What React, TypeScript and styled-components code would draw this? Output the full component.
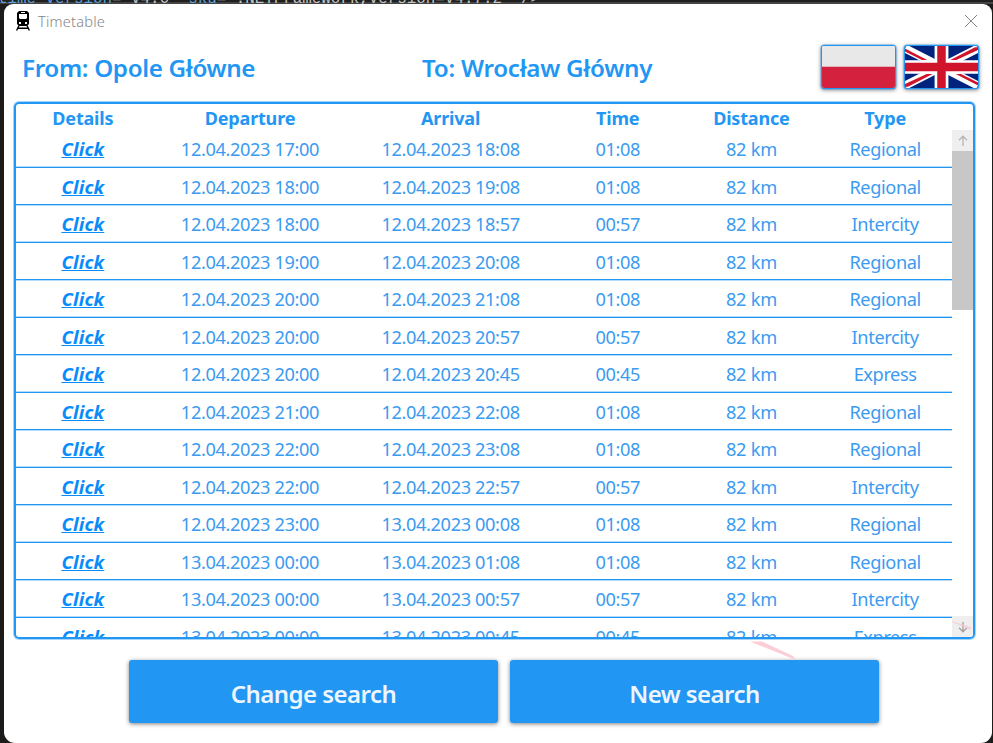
import React from "react";
import styled, { createGlobalStyle } from "styled-components";

const BLUE = "#2296f3";

const GlobalStyle = createGlobalStyle`
  * { box-sizing: border-box; }
  body { margin: 0; overflow: hidden; background: #1e1c1b; font-family: "Noto Sans", "Open Sans", sans-serif; }
`;

const Desktop = styled.div`
  position: relative;
  width: 993px;
  height: 743px;
  overflow: hidden;
  padding: 4px 1px 0 4px;
  background: linear-gradient(#1f1f1f 0 2px, #444 2px 4px, #1e1c1b 4px);
`;

const EditorLine = styled.div`
  position: absolute;
  left: -2px;
  top: -10px;
  height: 14px;
  overflow: hidden;
  white-space: pre;
  font: 15.85px/18px "Liberation Mono", monospace;
  color: #c4c4c4;
`;

const Attribute = styled.span`
  color: #5c9fd6;
`;

const Window = styled.main`
  position: relative;
  display: flex;
  flex-direction: column;
  height: 739px;
  background: #fff;
  border-radius: 9px 9px 11px 11px;
`;

const TitleBar = styled.header`
  display: flex;
  align-items: center;
  height: 34px;
  padding: 0 14px 1px 12px;
`;

const Title = styled.h1`
  flex: 1;
  margin: 0 0 0 8px;
  font-size: 14.6px;
  font-weight: 300;
  letter-spacing: 0.2px;
  color: #858585;
`;

const Route = styled.section`
  display: grid;
  grid-template-columns: 400px 1fr auto;
  height: 64px;
  padding: 7px 13px 0 18px;
`;

const Station = styled.h2<{ $track: string }>`
  margin: 5px 0 0;
  font-size: 24.2px;
  line-height: 36px;
  font-weight: 600;
  letter-spacing: ${(p) => p.$track};
  color: ${BLUE};
  white-space: nowrap;
`;

const Flags = styled.div`
  display: flex;
  gap: 8px;
`;

const FlagButton = styled.button`
  width: 75px;
  height: 44px;
  padding: 0;
  border: 1px solid ${BLUE};
  border-radius: 3px;
  overflow: hidden;
  background: #fff;
  box-shadow: 0 0 0 0.5px rgba(34, 150, 243, 0.6), 0 1px 4px rgba(0, 0, 0, 0.5);
  svg { display: block; width: 100%; height: 100%; }
`;

const Panel = styled.section`
  display: flex;
  flex-direction: column;
  width: 961px;
  height: 537px;
  margin-left: 10px;
  border: 2px solid ${BLUE};
  border-radius: 5px;
  box-shadow: 0 0 0 1px rgba(34, 150, 243, 0.4);
  overflow: hidden;
`;

const Columns = styled.div`
  display: grid;
  grid-template-columns: 1fr 1.5fr 1.5fr 1fr 1fr 1fr;
  width: 936px;
  text-align: center;
  white-space: nowrap;
`;

const HeadRow = styled(Columns)`
  height: 26px;
  font-size: 18px;
  line-height: 28px;
  font-weight: 700;
  color: ${BLUE};
`;

const HeadCell = styled.span`
  letter-spacing: -0.18px;
`;

const Body = styled.div`
  display: flex;
  flex: 1;
  min-height: 0;
`;

const List = styled.div`
  width: 936px;
  overflow: hidden;
`;

const Row = styled(Columns)`
  height: 37.5px;
  border-bottom: 1px solid ${BLUE};
  font-size: 18.2px;
  line-height: 38px;
  color: #3b9bf0;
  &:nth-child(odd) { box-shadow: inset 0 -1px 0 rgba(34, 150, 243, 0.35); }
  &:nth-child(even) { box-shadow: 0 1px 0 rgba(34, 150, 243, 0.35); }
`;

const Cell = styled.span<{ $track: string }>`
  letter-spacing: ${(p) => p.$track};
`;

const DetailLink = styled.a`
  font-weight: 700;
  font-style: italic;
  font-size: 18.6px;
  letter-spacing: 0.15px;
  color: #0a8bfa;
  text-decoration: underline;
  text-decoration-thickness: 1.3px;
  text-underline-offset: 1px;
`;

const ScrollBar = styled.div`
  display: flex;
  flex-direction: column;
  flex: 1;
`;

const ScrollButton = styled.div`
  display: grid;
  place-items: center;
  height: 21px;
  background: #efefef;
`;

const Track = styled.div`
  flex: 1;
`;

const Thumb = styled.div`
  height: 159px;
  background: #c7c7c7;
`;

const Actions = styled.footer`
  display: flex;
  gap: 12px;
  padding: 21px 0 0 125px;
`;

const ActionButton = styled.button`
  width: 369px;
  height: 63px;
  padding: 4px 0 0;
  border: 0;
  border-radius: 3px;
  background: ${BLUE};
  color: #edf6ff;
  font: 600 24px/34px "Noto Sans", sans-serif;
  letter-spacing: -0.55px;
  box-shadow: 0 1px 4px rgba(0, 0, 0, 0.5);
`;

const Streaks = styled.svg`
  position: absolute;
  left: 736px;
  top: 610px;
  pointer-events: none;
`;

const TrainIcon = () => (
  <svg width="14" height="20" viewBox="0 0 14 20">
    <path fillRule="evenodd" d="M3 0h8l2 2v11l-2 2H3l-2-2V2zM5 1v1h4V1zM3 3v4l1 1h6l1-1V3zM3 11v2h2v-2zM9 11v2h2v-2z" />
    <path d="M3 14.5.6 19.5M11 14.5l2.4 5M2.2 17.2h9.6" stroke="#000" strokeWidth="1.4" />
  </svg>
);

const CloseIcon = () => (
  <svg width="14" height="14" viewBox="0 0 14 14">
    <path d="M1 1l12 12M13 1L1 13" stroke="#858585" strokeWidth="1" />
  </svg>
);

const Arrow = ({ down, color }: { down?: boolean; color: string }) => (
  <svg width="10" height="12" viewBox="0 0 10 12">
    <path
      d={down ? "M5 1v9.5M1 6.8l4 4 4-4" : "M5 11V1.5M1 5.2l4-4 4 4"}
      fill="none"
      stroke={color}
      strokeWidth="1.3"
    />
  </svg>
);

const PolishFlag = () => (
  <svg viewBox="0 0 74 43" preserveAspectRatio="none">
    <path fill="#e8e8e8" d="M0 0h74v22H0z" />
    <path fill="#d4213d" d="M0 21.3h74V43H0z" />
  </svg>
);

const BritishFlag = () => (
  <svg viewBox="0 0 74 43" preserveAspectRatio="none">
    <path fill="#00247d" d="M0 0h74v43H0z" />
    <path stroke="#fff" strokeWidth="8.5" d="M0 2.5l74 38M74 2.5L0 40.5" />
    <path
      fill="#cf142b"
      d="M0 2.6l22.5 11.8h-5.3L0 5.6zM74 1.2v2.8L52 14.4h-6L71 1.2zM0 41.8V39l22-10.4h6L3 41.8zM74 40.4L51.5 28.6h5.3L74 37.4z"
    />
    <path stroke="#fff" strokeWidth="14" d="M37 0v43M0 21.5h74" />
    <path stroke="#cf142b" strokeWidth="8.6" d="M37 0v43M0 21.5h74" />
  </svg>
);

const heads = ["Details", "Departure", "Arrival", "Time", "Distance", "Type"];

const trips: [string, string, string, string][] = [
  ["12.04.2023 17:00", "12.04.2023 18:08", "01:08", "Regional"],
  ["12.04.2023 18:00", "12.04.2023 19:08", "01:08", "Regional"],
  ["12.04.2023 18:00", "12.04.2023 18:57", "00:57", "Intercity"],
  ["12.04.2023 19:00", "12.04.2023 20:08", "01:08", "Regional"],
  ["12.04.2023 20:00", "12.04.2023 21:08", "01:08", "Regional"],
  ["12.04.2023 20:00", "12.04.2023 20:57", "00:57", "Intercity"],
  ["12.04.2023 20:00", "12.04.2023 20:45", "00:45", "Express"],
  ["12.04.2023 21:00", "12.04.2023 22:08", "01:08", "Regional"],
  ["12.04.2023 22:00", "12.04.2023 23:08", "01:08", "Regional"],
  ["12.04.2023 22:00", "12.04.2023 22:57", "00:57", "Intercity"],
  ["12.04.2023 23:00", "13.04.2023 00:08", "01:08", "Regional"],
  ["13.04.2023 00:00", "13.04.2023 01:08", "01:08", "Regional"],
  ["13.04.2023 00:00", "13.04.2023 00:57", "00:57", "Intercity"],
  ["13.04.2023 00:00", "13.04.2023 00:45", "00:45", "Express"],
];

export default function App() {
  return (
    <Desktop>
      <GlobalStyle />
      <EditorLine>
        <Attribute>time version</Attribute>="v4.0" <Attribute>sku</Attribute>=".NETFramework,Version=v4.7.2" /&gt;
      </EditorLine>
      <Window>
        <TitleBar>
          <TrainIcon />
          <Title>Timetable</Title>
          <CloseIcon />
        </TitleBar>
        <Route>
          <Station $track="-0.33px">From: Opole Główne</Station>
          <Station $track="-0.27px">To: Wrocław Główny</Station>
          <Flags>
            <FlagButton aria-label="Polski"><PolishFlag /></FlagButton>
            <FlagButton aria-label="English"><BritishFlag /></FlagButton>
          </Flags>
        </Route>
        <Panel>
          <HeadRow>
            {heads.map((label) => (
              <HeadCell key={label}>{label}</HeadCell>
            ))}
          </HeadRow>
          <Body>
            <List>
              {trips.map(([departure, arrival, time, type], i) => (
                <Row key={i}>
                  <span><DetailLink>Click</DetailLink></span>
                  <Cell $track="-0.37px">{departure}</Cell>
                  <Cell $track="-0.37px">{arrival}</Cell>
                  <Cell $track="-0.37px">{time}</Cell>
                  <Cell $track="-0.25px">82 km</Cell>
                  <Cell $track="-0.4px">{type}</Cell>
                </Row>
              ))}
            </List>
            <ScrollBar>
              <ScrollButton><Arrow color="#b5b5b5" /></ScrollButton>
              <Track><Thumb /></Track>
              <ScrollButton><Arrow down color="#a5a0a0" /></ScrollButton>
            </ScrollBar>
          </Body>
        </Panel>
        <Actions>
          <ActionButton>Change search</ActionButton>
          <ActionButton>New search</ActionButton>
        </Actions>
        <Streaks width="250" height="50" viewBox="0 0 250 50">
          <path d="M10 27.5L56 46l-3-4L22 27.5z" fill="#fbcdd6" />
          <path d="M212 8l19 8v-3l-19-6z" fill="#f3cbd0" opacity=".7" />
        </Streaks>
      </Window>
    </Desktop>
  );
}
